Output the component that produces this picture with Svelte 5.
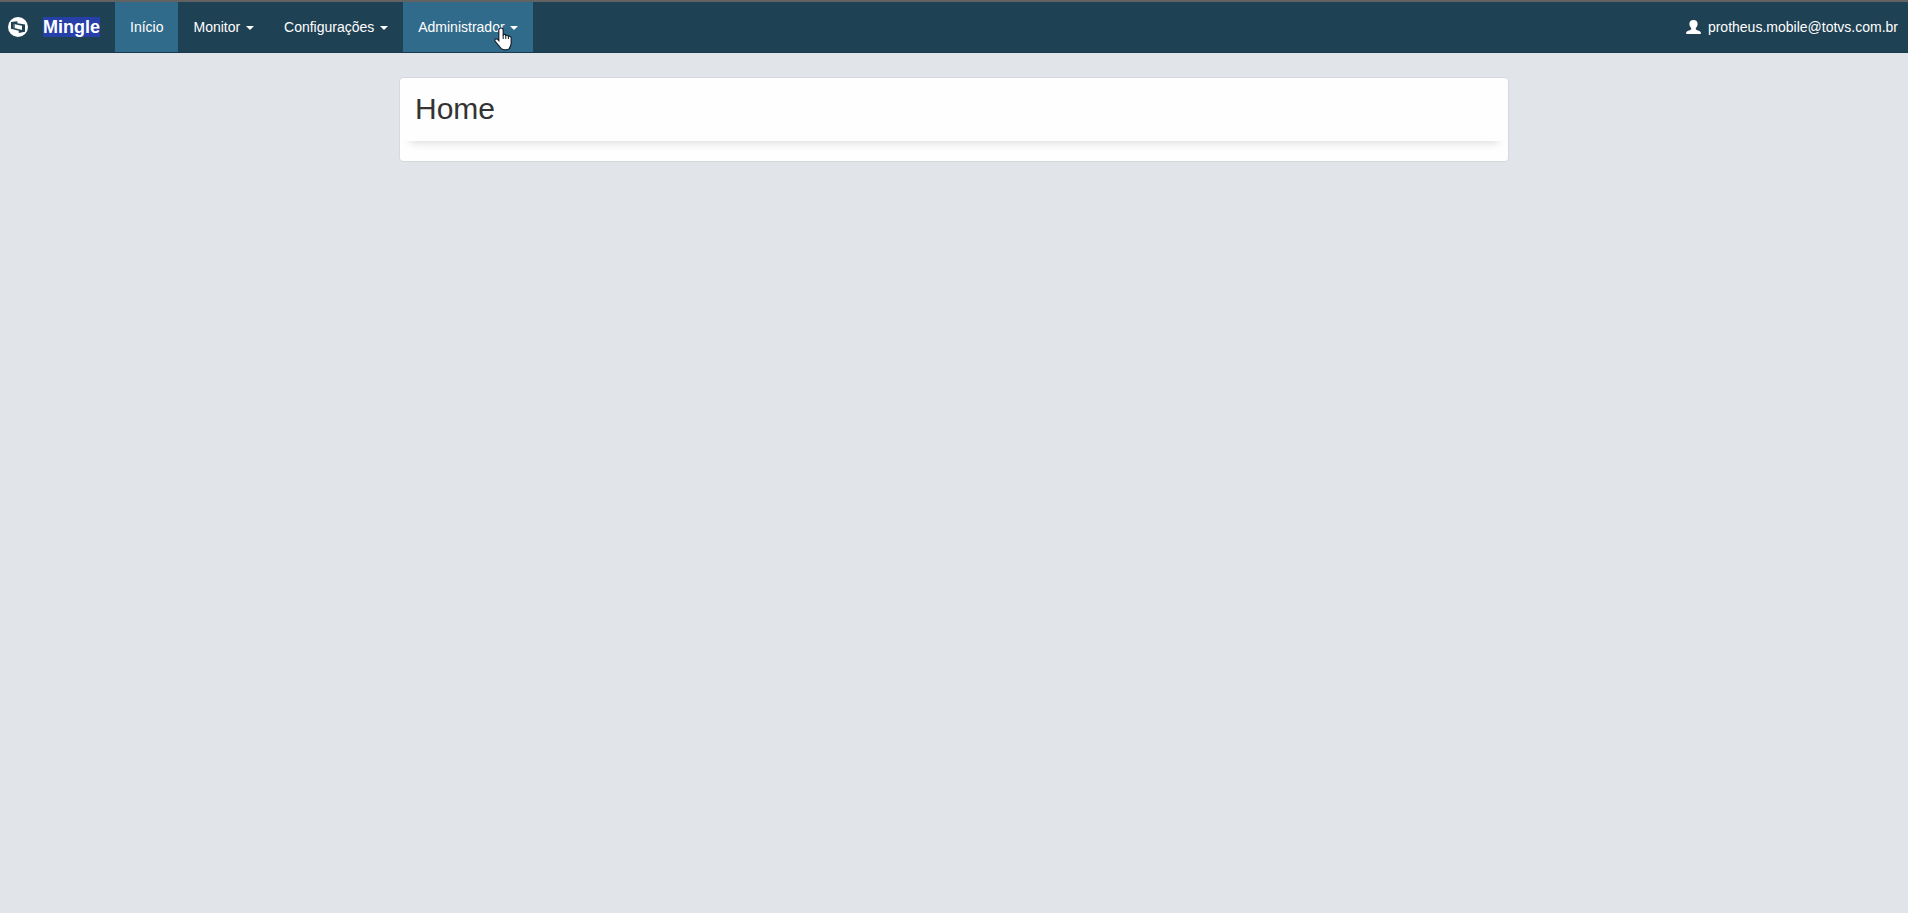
<script lang="ts">
  type NavItem = {
    label: string;
    active?: boolean;
    dropdown?: boolean;
  };

  const items: NavItem[] = [
    { label: "Início", active: true },
    { label: "Monitor", dropdown: true },
    { label: "Configurações", dropdown: true },
    { label: "Administrador", dropdown: true, active: true },
  ];

  const user = "protheus.mobile@totvs.com.br";
</script>

<header class="navbar">
  <a class="brand" href="#home">
    <svg class="logo" viewBox="0 0 20 20" width="20" height="20" aria-hidden="true">
      <circle cx="10" cy="10" r="10" fill="#fff" />
      <path
        d="M3 5 L9.4 4.2 V6.2 L17 7.4 V14.8 L10.8 16 V13.8 L3 11.8 Z"
        fill="#1f4154"
      />
      <path d="M5 6.6 L7.8 7.2 V10.4 L10.8 11.4 V12.8 L5 11 Z" fill="#fff" opacity="0.2" />
      <path d="M6.8 7.2 L14 8.8 V13 L6.8 11 Z" fill="#fff" />
    </svg>
    <span class="brand-name">Mingle</span>
  </a>

  <nav aria-label="Principal">
    <ul>
      {#each items as item (item.label)}
        <li>
          {#if item.dropdown}
            <button type="button" class="nav-item" class:active={item.active} aria-haspopup="menu">
              {item.label} <span class="caret"></span>
            </button>
          {:else}
            <a href="#inicio" class="nav-item" class:active={item.active}>{item.label}</a>
          {/if}
        </li>
      {/each}
    </ul>

    <!-- hand pointer resting on the last menu entry -->
    <svg class="pointer" viewBox="0 0 18 24" width="18" height="24" aria-hidden="true">
      <path
        d="M7 1 C8.4 1 9.2 1.9 9.2 3.1 V7.8 C10 7 11.6 7.4 11.8 8.6 C12.6 7.8 14.2 8.2 14.4 9.4 C15.6 8.8 17.2 9.6 17.2 11.2 V16 C17.2 18 16.2 19.4 15.6 21 V21.4 C14 23.4 9 23.4 7 21.4 C5.6 19.4 3.4 17.4 1 14 C0.4 12.2 2.2 11.2 3.6 12.4 L4.8 13.6 V3.1 C4.8 1.9 5.6 1 7 1 Z"
        fill="#fff"
        stroke="#14202c"
        stroke-width="1.2"
      />
      <path d="M9.2 8 V12 M11.8 8.6 V12 M14.4 9.4 V12" stroke="#14202c" fill="none" />
    </svg>
  </nav>

  <a class="user" href="#perfil">
    <svg viewBox="0 0 15 14" width="15" height="14" aria-hidden="true">
      <path
        d="M7.5 0 C10.2 0 11.6 1.6 11.6 4 C11.6 5.8 10.8 7.2 9.8 8 V9.4 C11.6 10.4 14.4 11 14.8 12.2 V14 H0.2 V12.2 C0.6 11 3.4 10.4 5.2 9.4 V8 C4.2 7.2 3.4 5.8 3.4 4 C3.4 1.6 4.8 0 7.5 0 Z"
        fill="#fff"
      />
    </svg>
    <span>{user}</span>
  </a>
</header>

<main>
  <section class="panel">
    <h1>Home</h1>
  </section>
</main>

<style>
  :global(body) {
    background: #e1e4e9;
    color: #333;
    font-family: "Liberation Sans", Arial, sans-serif;
    font-size: 14px;
    line-height: 20px;
  }

  .navbar {
    display: flex;
    height: 50px;
    background: #1f4154;
    border-top: 2px solid #626262;
    border-bottom: 1px solid #1a3a4d;
  }

  .brand {
    display: flex;
    align-items: center;
    gap: 15px;
    padding: 0 15px 0 8px;
    color: #fff;
    font-size: 18px;
    font-weight: bold;
    text-decoration: none;
  }

  .brand-name {
    background: #263fa9;
  }

  nav {
    position: relative;
    display: flex;
  }

  ul {
    display: flex;
    margin: 0;
    padding: 0;
    list-style: none;
  }

  li {
    display: flex;
  }

  .nav-item {
    box-sizing: border-box;
    padding: 15px;
    border: 0;
    background: transparent;
    color: #fff;
    font: inherit;
    text-decoration: none;
    white-space: nowrap;
    cursor: pointer;
  }

  .nav-item:hover,
  .nav-item.active {
    background: #316b8b;
  }

  .caret {
    display: inline-block;
    margin-left: 2px;
    border-top: 4px solid #fff;
    border-right: 4px solid transparent;
    border-left: 4px solid transparent;
    vertical-align: middle;
  }

  .pointer {
    position: absolute;
    right: 21px;
    bottom: 1px;
    pointer-events: none;
  }

  .user {
    display: flex;
    align-items: center;
    gap: 7px;
    margin-left: auto;
    padding: 0 10px;
    color: #fff;
    text-decoration: none;
  }

  main {
    max-width: 1110px;
    margin: 24px auto 0;
    padding: 0 15px;
  }

  .panel {
    padding-bottom: 20px;
    border: 1px solid #d5d8dc;
    border-radius: 4px;
    background: #fefefe;
  }

  h1 {
    margin: 0;
    padding: 14px 15px 16px;
    box-shadow: 0 12px 8px -10px #ddd;
    font-size: 30px;
    font-weight: normal;
    line-height: 33px;
  }
</style>
